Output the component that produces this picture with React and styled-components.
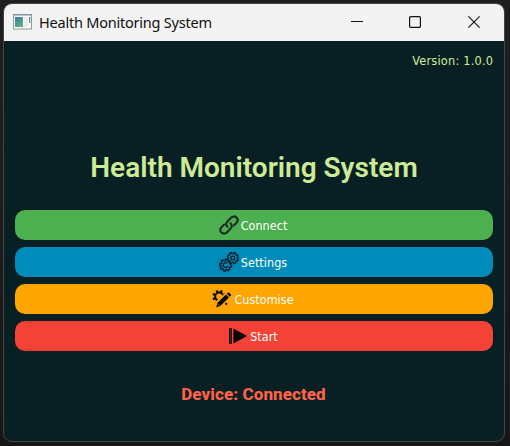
import React from "react";
import styled, { createGlobalStyle } from "styled-components";

const GlobalStyle = createGlobalStyle`
  *, *::before, *::after { box-sizing: border-box; }
  html, body { margin: 0; height: 100%; background: #1c1b1c; overflow: hidden; }
`;

const Desktop = styled.div`
  width: 510px;
  height: 446px;
  padding: 3px 5px 4px 3px;
  background: linear-gradient(#1f1f1f, #1c1b1c 60%, #171516);
`;

const Window = styled.main`
  display: flex;
  flex-direction: column;
  width: 502px;
  height: 439px;
  border: 1px solid #424748;
  border-radius: 9px;
  overflow: hidden;
  background: #082024;
`;

const TitleBar = styled.header`
  display: flex;
  align-items: center;
  flex: 0 0 37px;
  padding: 0 1px 1px 9px;
  background: #f3f3f3;
`;

const WindowTitle = styled.span`
  flex: 1;
  margin-left: 7px;
  font: 14.5px/20px "Noto Sans", "Open Sans", sans-serif;
  letter-spacing: -0.22px;
  color: #111;
  white-space: nowrap;
`;

const Controls = styled.div`
  display: flex;
  align-self: stretch;
`;

const ControlButton = styled.button`
  display: grid;
  place-items: center;
  width: 58.5px;
  padding: 0;
  border: 0;
  background: none;
`;

const Content = styled.section`
  display: flex;
  flex-direction: column;
  flex: 1;
  padding: 11px 11px 0;
`;

const Version = styled.div`
  align-self: flex-end;
  height: 18px;
  font: 12.6px/18px "DejaVu Sans Condensed", "DejaVu Sans", sans-serif;
  font-stretch: condensed;
  letter-spacing: 0.22px;
  margin-right: -0.2px;
  color: #d0ee9a;
`;

const Heading = styled.h1`
  margin: 78px 0 0;
  height: 40px;
  font: 600 28px/40px Roboto, sans-serif;
  text-align: center;
  color: #cdeb96;
  white-space: nowrap;
`;

const Actions = styled.div`
  display: grid;
  gap: 7px;
  margin-top: 22px;
`;

const ActionButton = styled.button`
  display: flex;
  align-items: center;
  justify-content: center;
  gap: 2px;
  height: 30px;
  padding: 0 2px 0 0;
  border: 0;
  border-radius: 10px;
  background: ${(p) => p.$color};
  color: #fff;
  font: 12.4px/18px "DejaVu Sans Condensed", "DejaVu Sans", sans-serif;
  font-stretch: condensed;
`;

const Label = styled.span`
  padding-top: 1px;
  letter-spacing: 0.08px;
`;

const Status = styled.p`
  margin: 32px 0 0;
  padding-right: 1px;
  font: 800 17px/22px Roboto, sans-serif;
  letter-spacing: 0.08px;
  text-align: center;
  color: #ff6347;
`;

const AppIcon = () => (
  <svg width="19" height="16" viewBox="0 0 19 16">
    <defs>
      <linearGradient id="screen" x1="0" y1="0" x2="0.7" y2="1">
        <stop offset="0" stopColor="#3c78a4" />
        <stop offset="1" stopColor="#5fb488" />
      </linearGradient>
    </defs>
    <rect x=".5" y=".5" width="18" height="14.5" fill="#fafafa" stroke="#9299a2" />
    <path d="M0 .8h19" stroke="#858f9d" strokeWidth="1.5" />
    <rect x="2" y="3" width="8" height="10" fill="url(#screen)" />
    <rect x="11" y="3" width="4" height="10" fill="#ececef" />
    <rect x="16" y="3" width="1.4" height="6" fill="url(#screen)" />
  </svg>
);

const gearPath = (cx, cy, outer, inner, teeth, turn = 0) => {
  const step = (Math.PI * 2) / teeth;
  const points = [];
  for (let i = 0; i < teeth; i++) {
    [[-0.27, inner], [-0.2, outer], [0.2, outer], [0.27, inner]].forEach(([k, r]) => {
      const a = turn + (i + k) * step;
      points.push(`${(cx + r * Math.cos(a)).toFixed(2)} ${(cy + r * Math.sin(a)).toFixed(2)}`);
    });
  }
  return `M${points.join("L")}Z`;
};

const LinkIcon = () => (
  <svg width="20" height="20" viewBox="0 0 20 20" fill="none" stroke="#1d2b22" strokeWidth="2.1" strokeLinecap="round">
    <path d="M8.5 11.7C6.8 10 6.9 8 8.4 6.5L12.2 2.6C13.7 1.1 16 1 17.5 2.5S19 6.2 17.5 7.8L14.9 10.4" />
    <path d="M11.5 8.2C13.2 9.9 13.1 12 11.6 13.5L7.8 17.4C6.3 18.9 4 19 2.5 17.5S1 13.8 2.5 12.2L5.1 9.6" />
  </svg>
);

const GearsIcon = () => (
  <svg width="20" height="20" viewBox="0 0 20 20" fill="none" stroke="#071c2a" strokeWidth="1.3" strokeLinejoin="round">
    <path d={gearPath(6.6, 13.2, 6.2, 4.7, 8, 0.15)} />
    <path d="M8.4 11.4A2.4 2.4 0 1 0 8.9 14" />
    <path d={gearPath(13.8, 6, 5.7, 4.5, 8, 0.39)} fill="#008cba" />
    <circle cx="13.8" cy="6" r="1.9" />
  </svg>
);

const CustomiseIcon = () => (
  <svg width="20" height="20" viewBox="0 0 20 20" fill="#080808">
    <path
      fillRule="evenodd"
      d={`${gearPath(7.2, 7.6, 6.9, 5.1, 8, 0.39)}M4.2 7.6a3 3 0 1 0 6 0a3 3 0 1 0 -6 0Z`}
    />
    <path d="M20 0L20 20H1L4 12.2 13.6 3.4Z" fill="#ffa500" />
    <path d="M14 5.6l3 3-8.4 8.2-4.4 1.8 1.4-4.8Z" />
    <path d="M14.8 4.8l1-1q.7-.6 1.4 0l1.6 1.6q.6.7 0 1.4l-1 1Z" />
    <path d="M6.3 15.2l1.4 1.4" stroke="#ffa500" strokeWidth=".7" />
    <path d="M12.8 14.8l1.5-1.4 1.2 1.5-1.5 1.4Z" />
  </svg>
);

const StartIcon = () => (
  <svg width="20" height="20" viewBox="0 0 20 20" fill="#080808">
    <path d="M1 2h1.5v16H1zM2.8 2h1v16h-1zM5.4 2.6L19.2 10 5.4 17.4Z" />
  </svg>
);

const actions = [
  { label: "Connect", color: "#4caf50", Icon: LinkIcon },
  { label: "Settings", color: "#008cba", Icon: GearsIcon },
  { label: "Customise", color: "#ffa500", Icon: CustomiseIcon },
  { label: "Start", color: "#f44336", Icon: StartIcon },
];

export default function App() {
  return (
    <>
      <GlobalStyle />
      <Desktop>
        <Window>
          <TitleBar>
            <AppIcon />
            <WindowTitle>Health Monitoring System</WindowTitle>
            <Controls>
              <ControlButton aria-label="Minimise">
                <svg width="12" height="12" viewBox="0 0 12 12"><path d="M0 5.5h12" stroke="#111" /></svg>
              </ControlButton>
              <ControlButton aria-label="Maximise">
                <svg width="12" height="12" viewBox="0 0 12 12"><rect x=".6" y=".6" width="10.8" height="10.8" rx="1" fill="none" stroke="#111" strokeWidth="1.2" /></svg>
              </ControlButton>
              <ControlButton aria-label="Close">
                <svg width="12" height="12" viewBox="0 0 12 12"><path d="M.4.4l11.2 11.2M11.6.4L.4 11.6" stroke="#111" strokeWidth="1.1" /></svg>
              </ControlButton>
            </Controls>
          </TitleBar>
          <Content>
            <Version>Version: 1.0.0</Version>
            <Heading>Health Monitoring System</Heading>
            <Actions>
              {actions.map(({ label, color, Icon }) => (
                <ActionButton key={label} $color={color}>
                  <Icon />
                  <Label>{label}</Label>
                </ActionButton>
              ))}
            </Actions>
            <Status>Device: Connected</Status>
          </Content>
        </Window>
      </Desktop>
    </>
  );
}
